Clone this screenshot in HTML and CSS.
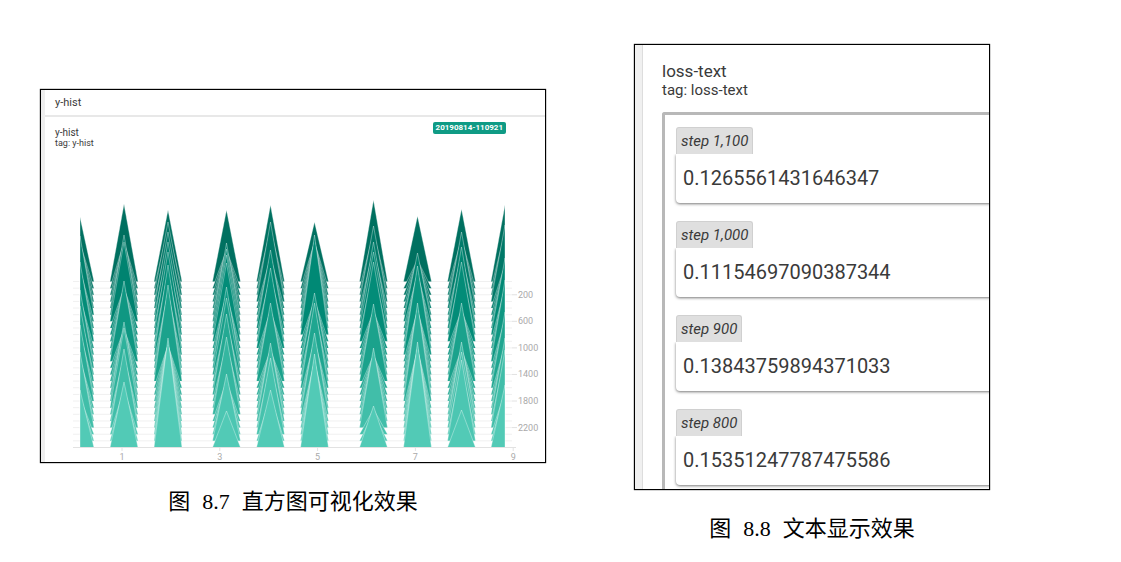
FILE: index.html
```html
<!DOCTYPE html>
<html lang="zh-CN">
<head>
<meta charset="utf-8">
<title>图 8.7 – 图 8.8</title>
<link rel="stylesheet" href="styles.css">
</head>
<body>
<main class="page">
  <figure class="figure figure-hist">
    <div class="frame hist">
      <header class="hist-bar">y-hist</header>
      <div class="hist-head">
        <div>
          <div class="hist-title">y-hist</div>
          <div class="hist-tag">tag: y-hist</div>
        </div>
        <span class="run">20190814-110921</span>
      </div>
      <svg class="chart" id="chart" viewBox="45 151 500 311" role="img" aria-label="y-hist"></svg>
    </div>
    <figcaption class="caption"><span>图</span><span>8.7</span><span>直方图可视化效果</span></figcaption>
  </figure>
  <figure class="figure">
    <div class="frame texts">
      <div class="text-title">loss-text</div>
      <div class="text-tag">tag: loss-text</div>
      <div class="steps">
        <section class="step"><span class="step-name">step 1,100</span><div class="step-value">0.1265561431646347</div></section>
        <section class="step"><span class="step-name">step 1,000</span><div class="step-value">0.11154697090387344</div></section>
        <section class="step"><span class="step-name">step 900</span><div class="step-value">0.13843759894371033</div></section>
        <section class="step"><span class="step-name">step 800</span><div class="step-value">0.15351247787475586</div></section>
      </div>
    </div>
    <figcaption class="caption"><span>图</span><span>8.8</span><span>文本显示效果</span></figcaption>
  </figure>
</main>
<script src="chart.js"></script>
</body>
</html>
```
FILE: styles.css
```css
* { box-sizing: border-box; }
body { margin: 0; background: #fff; font-family: Roboto, "Noto Sans", sans-serif; color: #3a3a3a; }
.page {
  display: grid;
  grid-template-columns: 506fr 356fr;
  gap: 88px;
  align-items: start;
  padding: 44px 131px 16px 40px;
}
.figure { margin: 0; min-width: 0; }
.figure-hist { padding-top: 45px; }
.frame { border: 1px solid #000; overflow: hidden; background: #fff; box-shadow: 0 0 1px #000; }
.hist { background: linear-gradient(90deg, #eee 4px, #fff 4px); padding-left: 4px; }
.hist-bar {
  height: 27px;
  padding-left: 10px;
  border-bottom: 2px solid #e8e8e8;
  font-size: 11px;
  line-height: 26px;
}
.hist-head {
  display: flex;
  justify-content: space-between;
  align-items: flex-start;
  height: 34px;
  padding: 5px 39px 0 10px;
}
.hist-title { margin-top: 5px; font-size: 10px; line-height: 11px; }
.hist-tag { font-size: 9px; line-height: 11px; }
.run {
  padding: 0 3px;
  border-radius: 2px;
  background: #0f9b85;
  color: #fff;
  font-size: 8px;
  font-weight: 700;
  line-height: 12px;
}
.chart { display: block; width: 100%; height: auto; }
.grid { stroke: #f0f0f0; stroke-width: 1; }
.axis { stroke: #e2e2e2; stroke-width: 1; }
.label { fill: #aaa; font-size: 9px; font-family: Roboto, sans-serif; }
.label-x { text-anchor: middle; }
.slice { stroke: #fff; stroke-opacity: .35; stroke-width: 1; }
.caption {
  display: flex;
  justify-content: center;
  gap: 12px;
  margin-top: 23px;
  color: #000;
  font-family: "Liberation Serif", "Noto Sans CJK SC", serif;
  font-size: 22px;
  line-height: 32px;
}
.texts {
  background: linear-gradient(90deg, #f0f0f0 7px, #ddd 7px 8px, #fff 8px);
  padding: 16px 0 0 27px;
}
.text-title { font-size: 17px; line-height: 20px; }
.text-tag { font-size: 15px; line-height: 18px; }
.steps {
  display: flex;
  flex-direction: column;
  gap: 18px;
  margin-top: 13px;
  padding: 12px 0 4px 11px;
  border: 3px solid #b8b8b8;
  border-right: 0;
  border-bottom: 0;
  border-top-left-radius: 3px;
}
.step-name {
  display: block;
  width: fit-content;
  padding: 0 4px;
  border: 1px solid #d0d0d0;
  border-bottom: 0;
  border-radius: 3px 3px 0 0;
  background: #dfdfdf;
  font-size: 15px;
  font-style: italic;
  line-height: 26px;
}
.step-value {
  margin-right: -4px;
  padding-left: 7px;
  border-radius: 0 0 4px 4px;
  background: #fff;
  box-shadow: 0 1px 3px #777;
  clip-path: inset(0 0 -5px -4px);
  font-size: 20px;
  line-height: 49px;
}
```
FILE: chart.js
```js
const svg = document.getElementById("chart");
const SLICES = 26, TOP = 281.5, STEP = 6.64, HALF = 14;

// Centre of each cluster, visible sides, and the ridge tops from back to front.
// "at" fixes the slice that each ridge belongs to.
const clusters = [
  { x: 80, side: "right", tops: [217, 236, 262, 290, 306, 325, 352, 390] },
  { x: 124, tops: [204, 235, 242, 281, 322, 328, 349, 382] },
  { x: 168, tops: [210, 222, 232, 242, 252, 265, 285, 338], at: [0, 2, 4, 6, 8, 11, 15, 25] },
  { x: 226.5, tops: [210, 243, 249, 255, 263, 287, 298, 314, 337, 374, 411] },
  { x: 270.5, tops: [205, 222, 250, 268, 303, 343, 358, 390] },
  { x: 314.5, tops: [222, 235, 293, 303, 333, 354], at: [0, 8, 13, 16, 20, 25] },
  { x: 373.5, tops: [200, 226, 242, 252, 262, 304, 348, 406] },
  { x: 417.5, tops: [216, 253, 266, 303, 342], at: [0, 6, 11, 18, 25] },
  { x: 461.5, tops: [209, 232, 247, 262, 303, 342, 352, 360, 410] },
  { x: 505, side: "left", tops: [205, 225, 258, 280, 312, 338, 350, 385] }
];

function add(name, attrs, text) {
  const el = document.createElementNS("http://www.w3.org/2000/svg", name);
  for (const key in attrs) el.setAttribute(key, attrs[key]);
  if (text !== undefined) el.textContent = text;
  svg.appendChild(el);
}

function ridges({ tops, at }) {
  const rows = new Array(SLICES).fill(null);
  let next = SLICES;
  for (let k = tops.length - 1; k >= 0; k--) {
    let row = at ? at[k] : Math.round((tops[k] + 78 - TOP) / STEP);
    if (k === tops.length - 1) row = SLICES - 1;
    if (k === 0) row = 0;
    row = Math.min(next - 1, row);
    rows[row] = tops[k];
    next = row;
  }
  let ahead = tops[tops.length - 1];
  for (let i = SLICES - 1; i >= 0; i--) {
    if (rows[i] === null) rows[i] = Math.min(ahead + 7, TOP + i * STEP - 25);
    else ahead = rows[i];
  }
  return rows;
}

function color(i) {
  const stops = [[0, 112, 96], [0, 138, 118], [34, 168, 146], [82, 202, 182]];
  const t = i / (SLICES - 1) * 3, n = Math.min(2, Math.floor(t));
  return "rgb(" + stops[n].map((v, c) => Math.round(v + (stops[n + 1][c] - v) * (t - n))) + ")";
}

const rows = clusters.map(ridges);
for (let i = 0; i < SLICES; i++) {
  const y = TOP + i * STEP;
  add("line", { class: "grid", x1: 73, x2: 512, y1: y, y2: y });
}
for (let i = 0; i < SLICES; i++) {
  const y = TOP + i * STEP;
  clusters.forEach((c, k) => {
    const left = c.side === "right" ? c.x : c.x - HALF;
    const right = c.side === "left" ? c.x : c.x + HALF;
    add("path", { class: "slice", fill: color(i), d: `M${left} ${y}L${c.x} ${rows[k][i]}L${right} ${y}` });
  });
}
add("line", { class: "axis", x1: 73, x2: 516, y1: 447.5, y2: 447.5 });
[200, 600, 1000, 1400, 1800, 2200].forEach(v => {
  const y = TOP + v / 100 * STEP;
  add("line", { class: "axis", x1: 512, x2: 517, y1: y, y2: y });
  add("text", { class: "label", x: 518, y: y + 3 }, v);
});
[1, 3, 5, 7, 9].forEach((v, i) => {
  const x = 122 + i * 97.8;
  add("line", { class: "axis", x1: x, x2: x, y1: 447, y2: 451 });
  add("text", { class: "label label-x", x, y: 460 }, v);
});
```
